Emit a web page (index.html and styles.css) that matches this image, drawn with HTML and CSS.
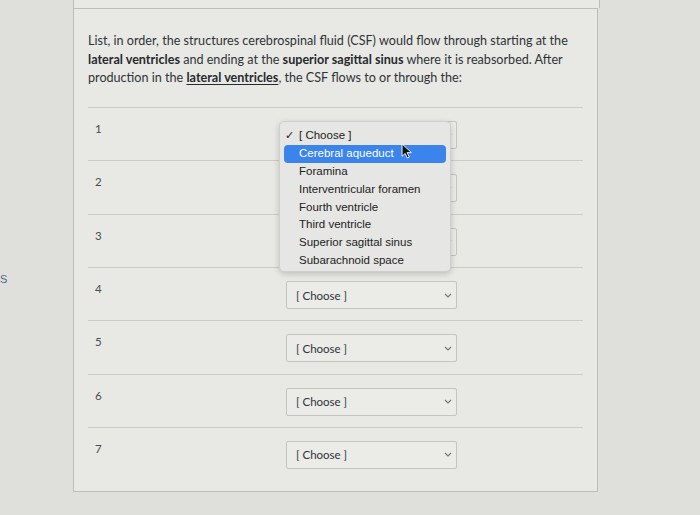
FILE: index.html
```html
<!DOCTYPE html>
<html>
<head>
<meta charset="utf-8">
<link rel="stylesheet" href="styles.css">
</head>
<body>
<div class="screen">
  <span class="edge-letter">S</span>
  <div class="prev-card"></div>
  <div class="card">
    <p class="prompt">List, in order, the structures cerebrospinal fluid (CSF) would flow through starting at the<br><strong>lateral ventricles</strong> and ending at the <strong>superior sagittal sinus</strong> where it is reabsorbed. After<br>production in the <strong class="ul">lateral ventricles</strong>, the CSF flows to or through the:</p>
    <div class="answers">
      <div class="row"><span class="num">1</span><div class="select"><span class="covered">[ Choose ]</span><svg class="chev" viewBox="0 0 8 5" width="8" height="5"><path d="M1 1l3 3 3-3" fill="none" stroke="#777" stroke-width="1.2"/></svg></div></div>
      <div class="row"><span class="num">2</span><div class="select"><span class="covered">[ Choose ]</span><svg class="chev" viewBox="0 0 8 5" width="8" height="5"><path d="M1 1l3 3 3-3" fill="none" stroke="#777" stroke-width="1.2"/></svg></div></div>
      <div class="row"><span class="num">3</span><div class="select"><span class="covered">[ Choose ]</span><svg class="chev" viewBox="0 0 8 5" width="8" height="5"><path d="M1 1l3 3 3-3" fill="none" stroke="#777" stroke-width="1.2"/></svg></div></div>
      <div class="row"><span class="num">4</span><div class="select"><span>[ Choose ]</span><svg class="chev" viewBox="0 0 8 5" width="8" height="5"><path d="M1 1l3 3 3-3" fill="none" stroke="#777" stroke-width="1.2"/></svg></div></div>
      <div class="row"><span class="num">5</span><div class="select"><span>[ Choose ]</span><svg class="chev" viewBox="0 0 8 5" width="8" height="5"><path d="M1 1l3 3 3-3" fill="none" stroke="#777" stroke-width="1.2"/></svg></div></div>
      <div class="row"><span class="num">6</span><div class="select"><span>[ Choose ]</span><svg class="chev" viewBox="0 0 8 5" width="8" height="5"><path d="M1 1l3 3 3-3" fill="none" stroke="#777" stroke-width="1.2"/></svg></div></div>
      <div class="row last"><span class="num">7</span><div class="select"><span>[ Choose ]</span><svg class="chev" viewBox="0 0 8 5" width="8" height="5"><path d="M1 1l3 3 3-3" fill="none" stroke="#777" stroke-width="1.2"/></svg></div></div>
    </div>
  </div>
  <ul class="popup">
    <li class="opt checked"><span class="check">✓</span>[ Choose ]</li>
    <li class="opt active">Cerebral aqueduct</li>
    <li class="opt">Foramina</li>
    <li class="opt">Interventricular foramen</li>
    <li class="opt">Fourth ventricle</li>
    <li class="opt">Third ventricle</li>
    <li class="opt">Superior sagittal sinus</li>
    <li class="opt">Subarachnoid space</li>
  </ul>
  <svg class="cursor" viewBox="0 0 12 18" width="11" height="16"><path d="M1 1v14l3.5-3.3 2.4 5.2 2.2-1-2.4-5.1h4.8z" fill="#111" stroke="#fff" stroke-width="1" stroke-linejoin="round"/></svg>
</div>
</body>
</html>
```

FILE: styles.css
```css
html, body {
  margin: 0;
  padding: 0;
}
body {
  background: #dfe0dc;
  font-family: Lato, "Open Sans", sans-serif;
  color: #2f3437;
}
.screen {
  position: relative;
  width: 700px;
  height: 515px;
  overflow: hidden;
}
.edge-letter {
  position: absolute;
  left: 0;
  top: 273px;
  font-size: 11px;
  color: #55658c;
  font-family: "Liberation Sans", sans-serif;
}
.prev-card {
  margin-left: 73px;
  width: 525px;
  height: 8px;
  border-left: 1px solid #bdbdb9;
  border-right: 1px solid #bdbdb9;
  background: #e8e8e4;
}
.card {
  margin-left: 73px;
  width: 525px;
  height: 484px;
  box-sizing: border-box;
  border: 1px solid #bdbdb9;
  background: #e8e8e4;
  padding: 23px 15px 0 14px;
}
.prompt {
  margin: 0 0 19px;
  font-size: 12.6px;
  line-height: 18.7px;
  width: 495px;
  white-space: nowrap;
}
.prompt strong {
  font-weight: 700;
  color: #262a2d;
}
.prompt .ul {
  text-decoration: underline;
  text-underline-offset: 2px;
}
.answers {
  border-top: 1px solid #cbcbc7;
  width: 495px;
}
.row {
  height: 52.3px;
  border-bottom: 1px solid #cbcbc7;
  display: grid;
  grid-template-columns: 191px 171px;
  padding-left: 7px;
  align-items: start;
}
.row.last {
  border-bottom: none;
}
.num {
  font-size: 11.5px;
  line-height: 16px;
  padding-top: 13px;
  color: #4a4d50;
}
.select {
  margin-top: 13px;
  height: 28px;
  box-sizing: border-box;
  border: 1px solid #c4c5c1;
  border-radius: 2px;
  background: #ebebe8;
  display: flex;
  align-items: center;
  justify-content: space-between;
  padding: 0 4px 0 9px;
  font-size: 11.5px;
  color: #2f3437;
}
.covered {
  visibility: hidden;
}
.chev {
  display: block;
}
.popup {
  position: absolute;
  left: 279px;
  top: 121px;
  width: 172px;
  height: 151px;
  box-sizing: border-box;
  margin: 0;
  padding: 5px 4px 3px;
  list-style: none;
  background: #e6e6e4;
  border: 1px solid #cfcfcd;
  border-radius: 5px;
  box-shadow: 0 2px 6px rgba(0,0,0,0.18);
  font-family: "Liberation Sans", Arial, sans-serif;
  font-size: 11.5px;
  color: #222;
}
.opt {
  height: 17.9px;
  line-height: 17.9px;
  padding-left: 15px;
  position: relative;
  border-radius: 4px;
  white-space: nowrap;
}
.opt.active {
  background: #3b84ec;
  color: #fff;
}
.check {
  position: absolute;
  left: 1px;
  top: 0;
  font-size: 11px;
}
.cursor {
  position: absolute;
  left: 401px;
  top: 143px;
}
```
